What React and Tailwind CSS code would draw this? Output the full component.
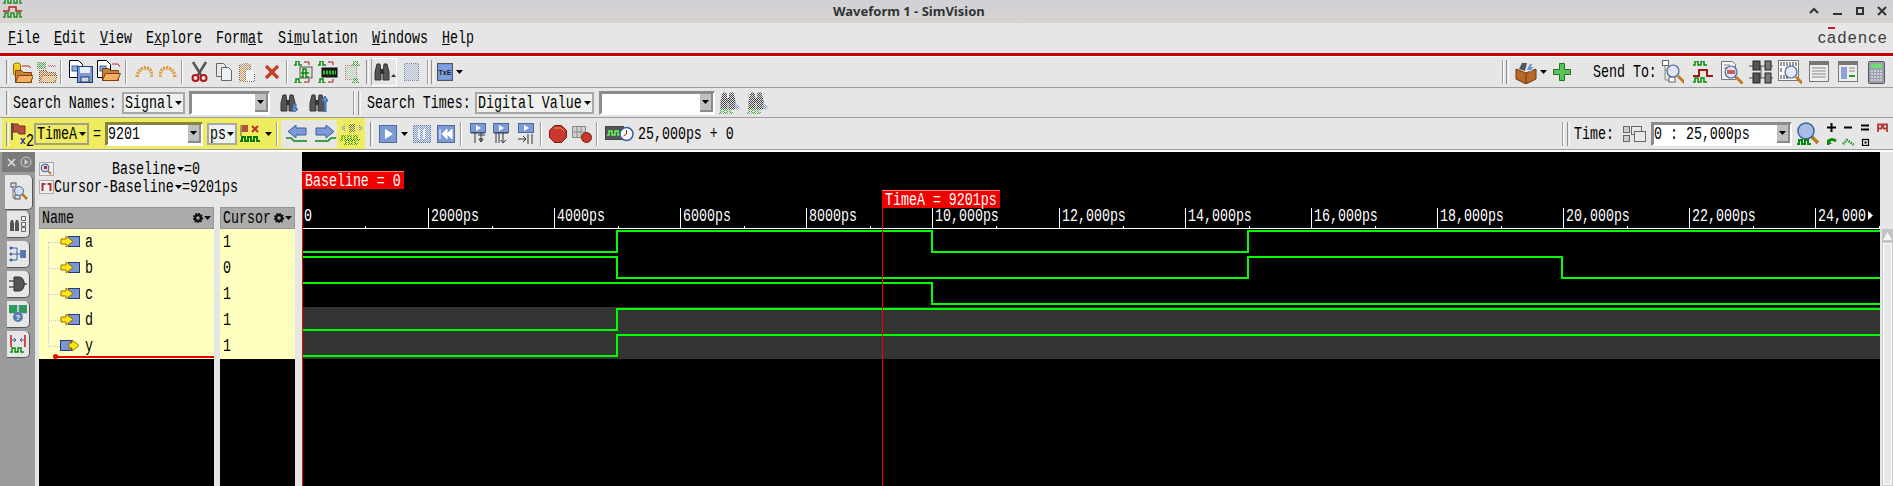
import React from 'react';

// text in the picture is a tall, narrow bitmap font at 8px per char, so squeeze Liberation Mono
const T = ({ children, u = -1, className = '' }) => {
  const text = String(children);
  return (
    <span style={{ width: text.length * 8 }} className={`inline-flex items-center h-[20px] shrink-0 ${className}`}>
      <span className="inline-block origin-left scale-x-[.7] whitespace-pre text-[19px] leading-[20px] font-[family-name:'Liberation_Mono',monospace]">
        {u < 0 ? text : (<>{text.slice(0, u)}<u className="underline-offset-1">{text[u]}</u>{text.slice(u + 1)}</>)}
      </span>
    </span>
  );
};

const S = ({ w, h, c = '', children }) => (
  <svg width={w} height={h} viewBox={`0 0 ${w} ${h}`} className={`shrink-0 ${c}`}>{children}</svg>
);

const Handle = ({ c = '' }) => <div className={`w-[3px] h-[24px] shrink-0 border-l border-r border-l-[#8f8f8f] border-r-[#f8f8f8] bg-[#e6e6e6] ${c}`} />;
const Sep = ({ c = '' }) => <div className={`w-[2px] h-[24px] shrink-0 border-l border-r border-l-[#9a9a9a] border-r-white ${c}`} />;
const Caret = ({ c = '' }) => <S w={7} h={4} c={c}><path d="M0 0h7L3.5 4z" fill="#000" /></S>;

// checker overlay gives the dithered look of disabled icons
const Off = ({ w, h, y }) => <rect width={w} height={h} fill={y ? 'url(#chkY)' : 'url(#chk)'} />;

const Wave = ({ x = 0, y = 0, n = 3, color = '#0a8a0a', sw = 1.5 }) => {
  let d = `M${x} ${y + 4}h2`;
  for (let i = 0; i < n; i++) d += 'v-4h3v4h3';
  return <path d={d} fill="none" stroke={color} strokeWidth={sw} />;
};

const FolderG = ({ x = 0, y = 0 }) => (
  <g transform={`translate(${x} ${y})`}>
    <path d="M.5 2.5h6l2 2h8v10H.5z" fill="#c9803a" stroke="#7a4210" />
    <path d="M.5 14.5l3-7h15l-3 7z" fill="#f4b060" stroke="#7a4210" />
  </g>
);
const PageG = ({ x = 0, y = 0 }) => (
  <g transform={`translate(${x} ${y})`}>
    <path d="M.5.5h9l4 4v13H.5z" fill="#fff" stroke="#000" />
    <rect x="3" y="6" width="6" height="5" fill="#8fb0e0" stroke="#36609a" />
  </g>
);

const OpenDb = () => (
  <S w={20} h={22}>
    <ellipse cx="4" cy="4" rx="3.5" ry="2" fill="#ffe23a" stroke="#8a7000" />
    <path d="M.5 4v9c0 2 7 2 7 0V4" fill="#f2c81c" stroke="#8a7000" />
    <path d="M9 5h7l2 2" fill="none" stroke="#b03020" />
    <FolderG x={2} y={7} />
  </S>
);
const OpenDis = () => (
  <S w={20} h={22}>
    <rect x="0" y="1" width="9" height="7" fill="#5aa05a" />
    <path d="M11 5h8" stroke="#b03020" />
    <FolderG x={2} y={7} />
    <Off w={20} h={22} />
  </S>
);
const SaveIcon = () => (
  <S w={24} h={24}>
    <PageG x={0} y={0} />
    <rect x="8.5" y="6.5" width="15" height="16" fill="#7e9ad0" stroke="#1e3c78" />
    <rect x="11" y="7" width="10" height="6" fill="#e8eefa" />
    <rect x="12" y="17" width="8" height="5" fill="#d4d8e0" stroke="#1e3c78" />
  </S>
);
const OpenPage = () => (
  <S w={24} h={24}>
    <PageG x={0} y={0} />
    <FolderG x={5} y={6} />
    <path d="M15 4h6l2 3" fill="none" stroke="#b03020" />
  </S>
);
const Undo = ({ flip }) => (
  <S w={18} h={14}>
    <g transform={flip ? 'translate(18 0) scale(-1 1)' : ''}>
      <path d="M2 12C3 5 8 2 12 3s5 5 5 9" fill="none" stroke="#dd9a3c" strokeWidth="3.5" strokeDasharray="2 1" />
    </g>
  </S>
);
const Scissors = () => (
  <S w={17} h={22}>
    <path d="M2 1l8 13M15 1L7 14" stroke="#555" strokeWidth="2.5" />
    <circle cx="4.5" cy="17" r="3" fill="none" stroke="#b81414" strokeWidth="2" />
    <circle cx="12.5" cy="17" r="3" fill="none" stroke="#b81414" strokeWidth="2" />
  </S>
);
const Copy = () => (
  <S w={16} h={18}>
    <path d="M.5.5h7l2 2v11H.5z" fill="#e8e8e8" stroke="#666" />
    <path d="M5.5 4.5h7l3 3v10h-10z" fill="#f0f0f0" stroke="#666" />
  </S>
);
const Paste = () => (
  <S w={16} h={20}>
    <rect x=".5" y="3" width="11" height="16" fill="#d89a50" stroke="#8a5a20" />
    <rect x="3" y="1" width="6" height="3" fill="#999" />
    <path d="M6.5 7.5h5l4 4v8h-9z" fill="#fff" stroke="#777" />
    <Off w={16} h={20} />
  </S>
);
const Cross = () => (
  <S w={16} h={16}>
    <path d="M2 2l12 12M14 2L2 14" stroke="#c8402c" strokeWidth="3.5" />
  </S>
);
const Binary = () => (
  <S w={20} h={22}>
    <Wave x={0} y={0} n={1} />
    <Wave x={0} y={18} n={1} />
    <path d="M10 1h5v3M10 21h5v-3" fill="none" stroke="#a01818" />
    <rect x="6" y="6" width="12" height="11" fill="#ddd" stroke="#555" />
    <Wave x={7} y={8} n={1} />
    <Wave x={7} y={12} n={1} />
  </S>
);
const Group2 = () => (
  <S w={20} h={22}>
    <Wave x={0} y={0} n={1} />
    <Wave x={0} y={18} n={1} />
    <path d="M10 1h5v3M10 21h5v-3" fill="none" stroke="#a01818" />
    <rect x="4" y="7" width="15" height="9" fill="#1a1a1a" stroke="#111" />
    <path d="M5 11.5h13" stroke="#22c022" strokeWidth="4" strokeDasharray="2 1" />
  </S>
);
const Group3 = () => (
  <S w={21} h={22}>
    <rect x="3" y="5" width="12" height="13" fill="#b4d4b4" stroke="#a01818" strokeDasharray="1 1" />
    <Wave x={10} y={0} n={1} />
    <Wave x={10} y={18} n={1} />
    <Off w={21} h={22} />
  </S>
);
const Binocs = ({ c = '#555' }) => (
  <g>
    <path d="M1 9l2-8h3l1 8v8H1z" fill={c} stroke="#333" />
    <path d="M9 9l1-8h3l2 8v8H9z" fill={c} stroke="#333" />
    <rect x="6" y="6" width="4" height="5" fill="#333" />
  </g>
);
const FindBox = () => (
  <div className="ml-[2px] w-[26px] h-[28px] shrink-0 border-t border-l border-b border-r border-t-white border-l-[#a0a0a0] border-r-white border-b-white flex items-center pl-[2px]">
    <S w={22} h={18}>
      <Binocs />
      <path d="M17 14h5l-2.5-3z" fill="#333" />
    </S>
  </div>
);
const Dots = () => (
  <S w={15} h={18}>
    <rect x=".5" y=".5" width="14" height="17" fill="#aebcd4" stroke="#6a86b0" />
    <Off w={15} h={18} />
  </S>
);
const TxE = () => (
  <S w={16} h={18}>
    <rect x=".5" y=".5" width="15" height="17" fill="#6f94da" stroke="#555" />
    <rect x="2" y="2" width="12" height="14" fill="#7da0e0" />
    <text x="8" y="12" fontSize="7" fontWeight="700" textAnchor="middle" fontFamily="Liberation Sans" fill="#222">TxE</text>
  </S>
);
const Toolbox = () => (
  <S w={22} h={24}>
    <path d="M1 9l10 4 10-4v10l-10 5-10-5z" fill="#b8682a" stroke="#6a3a10" />
    <path d="M11 13v11" stroke="#6a3a10" />
    <path d="M4 9l3-6h5l-2 8z" fill="#555" />
    <path d="M11 10l4-7 3 1-2 2 3 1-3 4z" fill="#6f94da" stroke="#e8e8e8" />
  </S>
);
const Plus = () => (
  <S w={18} h={18}>
    <path d="M6.5.5h5v6h6v5h-6v6h-5v-6h-6v-5h6z" fill="#5cc05c" stroke="#1a7a1a" />
  </S>
);
const Lens = ({ x = 8, y = 8, r = 6 }) => (
  <g>
    <path d={`M${x + r - 1} ${y + r - 1}l7 7`} stroke="#c07a20" strokeWidth="3" />
    <circle cx={x} cy={y} r={r} fill="#dbe4f5" fillOpacity=".8" stroke="#4a6a9a" strokeWidth="1.2" />
  </g>
);
const Tree1 = () => (
  <S w={22} h={24}>
    <path d="M3 4v16h6M3 10h6" fill="none" stroke="#888" />
    <rect x=".5" y=".5" width="6" height="5" fill="#fff" stroke="#666" />
    <rect x="7" y="17" width="6" height="5" fill="#fff" stroke="#666" />
    <Lens x={11} y={11} r={6} />
  </S>
);
const WaveMix = () => (
  <S w={20} h={22}>
    <Wave x={0} y={0} n={2} />
    <path d="M0 15h6v-6h8v6h6" fill="none" stroke="#a01818" strokeWidth="2" />
    <Wave x={0} y={17} n={2} />
  </S>
);
const DocLens = () => (
  <S w={22} h={24}>
    <path d="M.5 1.5h11l3 3v15H.5z" fill="#f4f4f4" stroke="#777" />
    <path d="M3 5h6M3 8h8" stroke="#888" />
    <Lens x={10} y={12} r={6} />
    <path d="M6 11h8M6 13h8" stroke="#c03030" strokeWidth="1.5" />
  </S>
);
const Blocks = () => (
  <S w={24} h={24}>
    <path d="M0 6h24M0 18h24M12 6v12" stroke="#555" />
    <rect x="4" y="1" width="7" height="9" fill="#555" stroke="#222" />
    <rect x="16" y="1" width="6" height="9" fill="#777" stroke="#222" />
    <rect x="4" y="13" width="7" height="10" fill="#555" stroke="#222" />
    <rect x="16" y="13" width="6" height="10" fill="#777" stroke="#222" />
  </S>
);
const BitsLens = () => (
  <S w={24} h={24}>
    <rect x=".5" y=".5" width="20" height="20" fill="#fff" stroke="#777" />
    <path d="M3 2v4M6 2v4M9 2v4M12 2v4M15 2v4M18 2v4M3 15v4M6 15v4M9 15v4M3 8v4" stroke="#333" />
    <Lens x={13} y={12} r={6} />
  </S>
);
const WinList = () => (
  <S w={20} h={22}>
    <rect x=".5" y=".5" width="19" height="20" fill="#eee" stroke="#777" />
    <rect x="1" y="1" width="18" height="3" fill="#777" />
    <path d="M3 7h14M3 10h14M3 13h14M3 16h14" stroke="#888" />
  </S>
);
const WinDetail = () => (
  <S w={20} h={22}>
    <rect x=".5" y=".5" width="19" height="20" fill="#eee" stroke="#777" />
    <rect x="1" y="1" width="18" height="3" fill="#777" />
    <rect x="3" y="6" width="6" height="12" fill="#8fa2d8" />
    <path d="M11 7h6M11 10h6" stroke="#888" />
    <path d="M11 15h6" stroke="#2aa02a" strokeWidth="2" />
  </S>
);
const Calc = () => (
  <S w={17} h={23}>
    <rect x=".5" y=".5" width="16" height="22" rx="1" fill="#9aa0a8" stroke="#556" />
    <rect x="3" y="3" width="11" height="4" fill="#6fdc6f" />
    <path d="M3 10h11M3 13h11M3 16h11M3 19h11" stroke="#dde" strokeWidth="1.5" strokeDasharray="2 1" />
  </S>
);
const BinoDown = ({ up }) => (
  <S w={19} h={18}>
    <Binocs />
    {up
      ? <path d="M15 18V7h-3l4-5 3 5h-2v11z" fill="#6f94da" stroke="#36609a" />
      : <path d="M13 10h3v5h2l-3.5 3-3.5-3h2z" fill="#6f94da" stroke="#36609a" />}
  </S>
);
const BinoWave = () => (
  <S w={22} h={22}>
    <g transform="translate(1 0)"><Binocs c="#444" /></g>
    <Wave x={0} y={17} n={2} color="#2a9a2a" />
    <path d="M15 15l3-3 3 3-3 3z" fill="#6f94da" />
    <Off w={22} h={22} />
  </S>
);
const FlagX2 = () => (
  <div className="relative w-[22px] h-[24px] ml-[2px] shrink-0">
    <S w={16} h={18}>
      <path d="M1 1v17" stroke="#555" strokeWidth="2" />
      <path d="M2 2h5l1 2h6v8H8l-1-2H2z" fill="#b3523c" stroke="#7a2a20" />
    </S>
    <span className="absolute left-[9px] top-[14px] text-[10px] font-bold leading-none text-[#1a2a90] font-[family-name:'Liberation_Sans',sans-serif]">x</span>
    <span className="absolute left-[15px] top-[6px]"><T>2</T></span>
  </div>
);
const FlagWave = () => (
  <S w={23} h={20}>
    <path d="M1 1v11" stroke="#555" />
    <path d="M2 1h6v7H2z" fill="#b3523c" />
    <path d="M12 2l6 6M18 2l-6 6" stroke="#c03030" strokeWidth="2" />
    <Wave x={0} y={13} n={3} color="#0a7a0a" sw={2} />
  </S>
);
const Arrow = ({ right }) => (
  <S w={21} h={18}>
    {right ? (
      <g>
        <path d="M1 3h10V0l8 6.5-8 6.5v-3H1z" fill="#7d9ad6" stroke="#36609a" />
        <path d="M0 16h13l3-3h5" fill="none" stroke="#0a8a0a" strokeWidth="1.5" />
      </g>
    ) : (
      <g>
        <path d="M20 3H10V0L2 6.5l8 6.5v-3h10z" fill="#7d9ad6" stroke="#36609a" />
        <path d="M21 16H8l-3-3H0" fill="none" stroke="#0a8a0a" strokeWidth="1.5" />
      </g>
    )}
  </S>
);
const Multi = () => (
  <S w={24} h={22}>
    <path d="M1 5l4-4v8zM23 5l-4-4v8z" fill="#6f94da" />
    <path d="M9 1h6v8H9z" fill="#777" />
    <Wave x={0} y={13} n={3} color="#0a8a0a" />
    <Wave x={4} y={17} n={2} color="#0a8a0a" />
    <Off w={24} h={22} y />
  </S>
);
const BlueBtn = ({ children, w = 18, h = 18, off }) => (
  <S w={w} h={h}>
    <rect x=".5" y=".5" width={w - 1} height={h - 1} fill="#7d9ad6" stroke="#4a6a9a" />
    {children}
    {off && <Off w={w} h={h} />}
  </S>
);
const Step = ({ kind }) => (
  <S w={16} h={22}>
    <rect x=".5" y=".5" width="15" height="9" fill="#7d9ad6" stroke="#4a6a9a" />
    <path d="M6 2l5 3-5 3z" fill="#fff" />
    {kind === 1 && <path d="M1 10h14M5 10v10M8 12h7M11 10v9M13 16l-2 3-2-3z" stroke="#334" fill="none" />}
    {kind === 2 && <path d="M1 10h14M3 10v10M6 10v10M10 10v9M8 17l2 3 3-3" stroke="#334" fill="none" />}
    {kind === 3 && <path d="M0 16h7M5 13l3 3-3 3M10 11v10M14 11v10" stroke="#334" fill="none" />}
  </S>
);
const Rec = () => (
  <S w={18} h={18}>
    <path d="M5.5.5h7l5 5v7l-5 5h-7l-5-5v-7z" fill="#c8382c" stroke="#7a1a14" />
    <path d="M5 3h7l3 3" fill="none" stroke="#e88878" />
  </S>
);
const RecSet = () => (
  <S w={20} h={18}>
    <rect x=".5" y="1.5" width="13" height="11" fill="#d0d0d0" stroke="#888" />
    <path d="M5 2v10M9 2v10M1 7h12" stroke="#888" />
    <circle cx="14.5" cy="12.5" r="5" fill="#c8382c" stroke="#7a1a14" />
  </S>
);
const SimClock = () => (
  <S w={29} h={17}>
    <rect x=".5" y="1.5" width="18" height="13" fill="#555" stroke="#444" />
    <Wave x={2} y={6} n={2} color="#5cff5c" />
    <circle cx="21.5" cy="9" r="6.5" fill="#fff" stroke="#36609a" strokeWidth="1.5" />
    <path d="M21.5 5v4l-3 2" fill="none" stroke="#a01818" />
  </S>
);
const TimeIcons = () => (
  <S w={23} h={20}>
    <rect x=".5" y="2.5" width="6" height="6" fill="#ccc" stroke="#666" />
    <rect x=".5" y="11.5" width="6" height="6" fill="#ccc" stroke="#666" />
    <rect x="8.5" y="2.5" width="10" height="8" fill="#e8e8e8" stroke="#666" />
    <rect x="11.5" y="7.5" width="11" height="10" fill="#e8e8e8" stroke="#666" />
  </S>
);
const ZoomWave = () => (
  <S w={23} h={24}>
    <path d="M13 13l8 8" stroke="#b87a20" strokeWidth="3.5" />
    <circle cx="9" cy="9" r="8" fill="#a8bce8" stroke="#36609a" strokeWidth="1.5" />
    <Wave x={0} y={18} n={2} color="#0a8a0a" sw={2} />
  </S>
);
const ZoomCluster = () => (
  <S w={62} h={24} c="ml-[7px]">
    <path d="M0 5.500h9M4.500 1v9M17 5.500h8M34 3.500h8M34 7.500h8" stroke="#000" strokeWidth="2" />
    <path d="M51 10V2.500h4v4M60 10V2.500h-4v4M51 6.500h4M60 6.500h-4" fill="none" stroke="#b03838" strokeWidth="1.800" />
    <path d="M1 23v-3c2-3 5-3 8-1" fill="none" stroke="#0a8a0a" strokeWidth="3" />
    <path d="M0 17v5h5z" fill="#0a8a0a" />
    <path d="M16 22l4-4 7 5" fill="none" stroke="#2a9a2a" strokeWidth="2.500" strokeDasharray="1.500 1" />
    <rect x="35.500" y="17.500" width="6" height="6" fill="none" stroke="#000" strokeWidth="1.200" />
    <rect x="37.500" y="19.500" width="2" height="2" fill="#000" />
  </S>
);

const Combo = ({ w, text, yellow }) => (
  <div className={`${w} h-[22px] shrink-0 flex items-center border-2 pl-[1px] ${yellow ? 'border-[#a0a088] bg-[#efec5f]' : 'border-[#a8a8a8] bg-[#eef1ee]'}`}>
    <T>{text}</T>
    <Caret c="ml-auto mr-[1px]" />
  </div>
);
const Input = ({ w, text, olive }) => (
  <div className={`${w} h-[24px] shrink-0 flex items-center bg-white border-t-[3px] border-l-[3px] ${olive ? 'border-[#84843c]' : 'border-[#8c8c8c]'} border-r-[2px] border-b-[2px] border-r-white border-b-white`}>
    {text && <T>{text}</T>}
    <div className="ml-auto w-[13px] h-[18px] bg-[#c0c0c0] border-r-2 border-b-2 border-[#8a8a8a] flex items-center justify-center"><Caret /></div>
  </div>
);

const menus = [['File', 0], ['Edit', 0], ['View', 0], ['Explore', 1], ['Format', 4], ['Simulation', 2], ['Windows', 0], ['Help', 0]];

const TitleBar = () => (
  <div className="h-[23px] shrink-0 flex items-center relative bg-linear-to-b from-[#d2d0d6] to-[#d7d4cd]">
    <S w={19} h={18} c="ml-[3px] self-start">
      <Wave x={0} y={-1} n={3} color="#1f8f1f" />
      <path d="M0 11h6V7h7v4h6" fill="none" stroke="#c02020" strokeWidth="1.5" />
      <Wave x={0} y={13} n={3} color="#1f8f1f" />
    </S>
    <span className="absolute left-[833px] text-[13px] font-bold text-[#2e3436] font-[family-name:'Noto_Sans',sans-serif]">Waveform 1 - SimVision</span>
    <S w={80} h={14} c="ml-auto mr-[4px]">
      <path d="M1 8l4-4 4 4" fill="none" stroke="#2e3436" strokeWidth="2" />
      <path d="M24 9h9" stroke="#2e3436" strokeWidth="2" />
      <rect x="48" y="3" width="6" height="6" fill="none" stroke="#2e3436" strokeWidth="2" />
      <path d="M69 2l8 8M77 2l-8 8" stroke="#2e3436" strokeWidth="2" />
    </S>
  </div>
);

const MenuBar = () => (
  <div className="h-[30px] shrink-0 flex items-center bg-[#e6e6e6] pl-[8px] gap-[14px]">
    {menus.map(([m, u]) => <T key={m} u={u}>{m}</T>)}
    <span className="ml-auto mr-[5px] relative text-[16px] tracking-[1.4px] text-[#3a3a3a] font-[family-name:'Liberation_Sans',sans-serif]">
      cadence
      <span className="absolute left-[10px] top-[1px] w-[7px] h-[2px] bg-[#c02020]" />
    </span>
  </div>
);

const ToolbarOne = () => (
  <div className="h-[31px] shrink-0 flex items-center bg-[#e6e6e6] pl-[6px] border-b border-[#9c9c9c]">
    <Handle />
    <div className="ml-[4px]"><OpenDb /></div>
    <div className="ml-[4px]"><OpenDis /></div>
    <Sep c="ml-[3px]" />
    <div className="ml-[7px]"><SaveIcon /></div>
    <div className="ml-[4px]"><OpenPage /></div>
    <Sep c="ml-[4px]" />
    <div className="ml-[8px]"><Undo /></div>
    <div className="ml-[6px]"><Undo flip /></div>
    <Sep c="ml-[4px]" />
    <div className="ml-[8px]"><Scissors /></div>
    <div className="ml-[8px]"><Copy /></div>
    <div className="ml-[7px]"><Paste /></div>
    <div className="ml-[9px]"><Cross /></div>
    <Sep c="ml-[6px]" />
    <div className="ml-[6px]"><Binary /></div>
    <div className="ml-[4px]"><Group2 /></div>
    <div className="ml-[4px]"><Group3 /></div>
    <Handle c="ml-[3px]" />
    <FindBox />
    <div className="ml-[7px]"><Dots /></div>
    <Sep c="ml-[8px]" />
    <Handle c="ml-[2px]" />
    <div className="ml-[3px]"><TxE /></div>
    <Caret c="ml-[3px]" />
    <div className="flex-1" />
    <Sep />
    <Handle c="ml-[2px]" />
    <div className="ml-[6px]"><Toolbox /></div>
    <Caret c="ml-[3px]" />
    <div className="ml-[6px]"><Plus /></div>
    <T className="ml-[22px]">Send To:</T>
    <div className="ml-[5px]"><Tree1 /></div>
    <div className="ml-[9px]"><WaveMix /></div>
    <div className="ml-[8px]"><DocLens /></div>
    <div className="ml-[6px]"><Blocks /></div>
    <div className="ml-[5px]"><BitsLens /></div>
    <div className="ml-[7px]"><WinList /></div>
    <div className="ml-[9px]"><WinDetail /></div>
    <div className="ml-[10px] mr-[8px]"><Calc /></div>
  </div>
);

const ToolbarTwo = () => (
  <div className="h-[30px] shrink-0 flex items-center bg-[#e6e6e6] pl-[6px] border-b border-[#9c9c9c]">
    <Handle />
    <T className="ml-[4px]">Search Names:</T>
    <div className="ml-[5px]"><Combo w="w-[63px]" text="Signal" /></div>
    <div className="ml-[4px]"><Input w="w-[81px]" /></div>
    <div className="ml-[10px]"><BinoDown /></div>
    <div className="ml-[10px]"><BinoDown up /></div>
    <Sep c="ml-[25px]" />
    <Handle c="ml-[3px]" />
    <T className="ml-[6px]">Search Times:</T>
    <div className="ml-[4px]"><Combo w="w-[119px]" text="Digital Value" /></div>
    <div className="ml-[5px]"><Input w="w-[116px]" /></div>
    <div className="ml-[4px]"><BinoWave /></div>
    <div className="ml-[6px]"><BinoWave /></div>
  </div>
);

const ToolbarThree = () => (
  <div className="h-[32px] shrink-0 flex items-center bg-[#e6e6e6] border-b border-[#9c9c9c]">
    <div className="ml-[2px] w-[363px] h-full shrink-0 flex items-center bg-[#efec5f] pl-[4px]">
      <Handle />
      <FlagX2 />
      <div className="ml-[1px]"><Combo w="w-[55px]" text="TimeA" yellow /></div>
      <T className="ml-[4px]">=</T>
      <div className="ml-[4px]"><Input w="w-[98px]" text="9201" olive /></div>
      <div className="ml-[4px]"><Combo w="w-[30px]" text="ps" /></div>
      <div className="ml-[3px]"><FlagWave /></div>
      <Caret c="ml-[2px]" />
      <Sep c="ml-[4px]" />
      <div className="ml-[3px] w-[56px] h-[28px] shrink-0 bg-[#e6e6e6] flex items-center pl-[5px] gap-[8px]">
        <Arrow /><Arrow right />
      </div>
      <div className="ml-[3px]"><Multi /></div>
    </div>
    <Handle c="ml-[5px]" />
    <div className="ml-[6px]">
      <BlueBtn><path d="M6 4l8 5-8 5z" fill="#fff" /></BlueBtn>
    </div>
    <Caret c="ml-[4px]" />
    <div className="ml-[5px]">
      <BlueBtn off><path d="M6 4v10M11 4v10" stroke="#fff" strokeWidth="2" /></BlueBtn>
    </div>
    <div className="ml-[6px]">
      <BlueBtn><path d="M3 4v10M10 4l-5 5 5 5zM15 4l-5 5 5 5z" fill="#fff" stroke="#fff" /></BlueBtn>
    </div>
    <Sep c="ml-[5px]" />
    <div className="ml-[8px]"><Step kind={1} /></div>
    <div className="ml-[7px]"><Step kind={2} /></div>
    <div className="ml-[9px]"><Step kind={3} /></div>
    <Sep c="ml-[6px]" />
    <div className="ml-[7px]"><Rec /></div>
    <div className="ml-[5px]"><RecSet /></div>
    <Sep c="ml-[4px]" />
    <div className="ml-[7px]"><SimClock /></div>
    <T className="ml-[4px]">25,000ps + 0</T>
    <div className="flex-1" />
    <Sep />
    <Handle c="ml-[3px]" />
    <T className="ml-[4px]">Time:</T>
    <div className="ml-[9px]"><TimeIcons /></div>
    <div className="ml-[5px]"><Input w="w-[141px]" text="0 : 25,000ps" /></div>
    <div className="ml-[5px]"><ZoomWave /></div>
    <ZoomCluster />
    <div className="w-[4px]" />
  </div>
);

const TabIcon = ({ i }) => {
  if (i === 0) return (
    <S w={18} h={20}>
      <path d="M3 2v14h4M3 8h4" fill="none" stroke="#777" />
      <rect x="1" y="1" width="5" height="4" fill="#ddd" stroke="#555" />
      <rect x="5" y="13" width="5" height="4" fill="#ddd" stroke="#555" />
      <path d="M12 12l5 5" stroke="#b87a20" strokeWidth="2.5" />
      <circle cx="9" cy="9" r="4.5" fill="#cfdcf5" stroke="#4a6a9a" />
    </S>
  );
  if (i === 1) return (
    <S w={18} h={18}>
      <path d="M1 8l1-3h2l1 3v8H1zM6 8l1-3h2l1 3v8H6z" fill="#555" />
      <path d="M12.5 1.500h4v4h-4zM12.5 7.500h4v4h-4zM12.5 12.500h4v4h-4z" fill="#eee" stroke="#666" />
    </S>
  );
  if (i === 2) return (
    <S w={18} h={16}>
      <path d="M1 2h7v12H1M4 8h8" fill="none" stroke="#36609a" />
      <circle cx="2" cy="2" r="1.5" fill="#36609a" /><circle cx="2" cy="8" r="1.5" fill="#36609a" /><circle cx="2" cy="14" r="1.5" fill="#36609a" />
      <rect x="11" y="4" width="6" height="8" fill="#5a78b0" />
    </S>
  );
  if (i === 3) return (
    <S w={18} h={16}>
      <path d="M0 5h5M0 11h5M15 8h3" stroke="#555" strokeWidth="1.5" />
      <path d="M5 1h5c7 0 7 14 0 14H5z" fill="#555" stroke="#333" />
    </S>
  );
  if (i === 4) return (
    <S w={18} h={18}>
      <rect x="0" y="0" width="8" height="8" fill="#2a9a5a" stroke="#5a8a9a" strokeDasharray="2 1" />
      <rect x="10" y="0" width="8" height="8" fill="#2a9a5a" stroke="#5a8a9a" strokeDasharray="2 1" />
      <circle cx="9" cy="12" r="5" fill="#5a78b0" />
      <text x="9" y="15" fontSize="8" fontWeight="700" textAnchor="middle" fontFamily="Liberation Sans" fill="#fff">?</text>
    </S>
  );
  return (
    <S w={16} h={18}>
      <path d="M1 0v12M15 0v12" stroke="#d01818" strokeWidth="1.5" />
      <path d="M2 5h4l-2-2M6 5l-2 2M14 5h-4l2-2M10 5l2 2" fill="none" stroke="#36609a" />
      <Wave x={0} y={13} n={2} color="#0a8a0a" />
    </S>
  );
};

const Rail = () => (
  <div className="w-[35px] shrink-0 bg-[#9b9b9b] flex flex-col">
    <div className="h-[20px] shrink-0 ml-[2px] bg-[#7b7b7b] flex items-center pl-[5px] gap-[4px]">
      <S w={9} h={9}><path d="M1 1l7 7M8 1L1 8" stroke="#e0e0e0" strokeWidth="1.5" /></S>
      <S w={12} h={12}><circle cx="6" cy="6" r="5" fill="none" stroke="#d0d0d0" /><path d="M4.5 3l4 3-4 3z" fill="#d0d0d0" /></S>
    </div>
    <div className="mt-[3px] ml-[5px] w-[28px] h-[35px] bg-[#e6e6e6] rounded-tr-[5px] rounded-br-[5px] border-r border-b border-[#555] flex items-center justify-center">
      <TabIcon i={0} />
    </div>
    <div className="flex flex-col gap-[3px] pt-[1px] ml-[7px]">
      {[1, 2, 3, 4, 5].map((i) => (
        <div key={i} className="w-[23px] h-[27px] bg-[#e6e6e6] rounded-tr-[5px] rounded-br-[5px] border-r border-b border-[#555] flex items-center justify-center">
          <TabIcon i={i} />
        </div>
      ))}
    </div>
  </div>
);

const Gear = () => (
  <S w={18} h={10} c="ml-auto mr-[2px]">
    <circle cx="5" cy="5" r="3" fill="none" stroke="#111" strokeWidth="2.5" />
    <circle cx="5" cy="5" r="4.500" fill="none" stroke="#111" strokeWidth="1.5" strokeDasharray="1.5 1.5" />
    <path d="M11 3h7l-3.5 4z" fill="#111" />
  </S>
);

const SigIcon = ({ out }) => (
  <S w={20} h={12}>
    {out ? (
      <g>
        <rect x=".5" y=".5" width="11" height="10" fill="#7d96d0" stroke="#1e3c78" />
        <path d="M9 3h3V0l7 5.5-7 5.5V8H9z" fill="#ffe81a" stroke="#a06a00" />
      </g>
    ) : (
      <g>
        <rect x="8.5" y=".5" width="11" height="10" fill="#7d96d0" stroke="#1e3c78" />
        <path d="M1 3h5V0l7 5.5L6 11V8H1z" fill="#ffe81a" stroke="#a06a00" />
      </g>
    )}
  </S>
);

const signals = [
  { name: 'a', value: '1' },
  { name: 'b', value: '0' },
  { name: 'c', value: '1' },
  { name: 'd', value: '1' },
  { name: 'y', value: '1', out: true },
];

const NamesPanel = () => (
  <div className="w-[267px] shrink-0 bg-[#e6e6e6] pl-[4px] flex flex-col">
    <div className="h-[55px] shrink-0 pt-[8px] flex flex-col">
      <div className="h-[18px] flex items-center">
        <S w={15} h={14}><rect x=".5" y=".5" width="14" height="13" fill="#eee" stroke="#aaa" /><circle cx="6" cy="6" r="4" fill="#c8d4ee" stroke="#36609a" /><path d="M5 4h3v3H5z" fill="#b03030" /><path d="M9 9l3 3" stroke="#b87a20" strokeWidth="2" /></S>
        <T className="ml-[58px]">Baseline</T>
        <Caret c="ml-[1px]" />
        <T>=0</T>
      </div>
      <div className="h-[18px] flex items-center">
        <S w={15} h={14}><rect x=".5" y=".5" width="14" height="13" fill="#eee" stroke="#aaa" /><path d="M3.5 11V4h3M11.5 11V4h-3" fill="none" stroke="#b03030" strokeWidth="2" /></S>
        <T>Cursor-Baseline</T>
        <Caret c="ml-[1px]" />
        <T>=9201ps</T>
      </div>
    </div>
    <div className="flex-1 flex gap-[6px]">
      <div className="w-[175px] flex flex-col">
        <div className="h-[22px] shrink-0 bg-[#ababab] border border-[#959595] flex items-center pl-[2px]"><T>Name</T><Gear /></div>
        <div className="h-[130px] shrink-0 bg-[#ffffc0] relative">
          <div className="absolute left-[9px] top-[13px] h-[104px] w-[15px] border-l border-dotted border-[#c4c4e4]" />
          {signals.map((s) => (
            <div key={s.name} className="h-[26px] flex items-center pl-[21px] relative">
              <div className="absolute left-[10px] w-[11px] border-t border-dotted border-[#c4c4e4]" />
              <SigIcon out={s.out} />
              <T className="ml-[5px]">{s.name}</T>
            </div>
          ))}
          <div className="absolute left-[17px] right-0 bottom-[1px] h-[2px] bg-[#f00000]" />
          <div className="absolute left-[14px] bottom-0 w-[5px] h-[5px] rounded-full bg-[#f00000]" />
        </div>
        <div className="flex-1 bg-black" />
      </div>
      <div className="w-[75px] flex flex-col">
        <div className="h-[22px] shrink-0 bg-[#ababab] border border-[#959595] flex items-center pl-[2px]"><T>Cursor</T><Gear /></div>
        <div className="h-[130px] shrink-0 bg-[#ffffc0]">
          {signals.map((s) => (
            <div key={s.name} className="h-[26px] flex items-center pl-[3px]"><T>{s.value}</T></div>
          ))}
        </div>
        <div className="flex-1 bg-black" />
      </div>
    </div>
  </div>
);

const ticks = ['0', '2000ps', '4000ps', '6000ps', '8000ps', '10,000ps', '12,000ps', '14,000ps', '16,000ps', '18,000ps', '20,000ps', '22,000ps', '24,000'];

// level changes of each trace, in px from the left of the wave panel
const traces = [
  'M0 23H315V2H630V23H946V2H1578',
  'M0 2H315V23H946V2H1260V23H1578',
  'M0 2H630V23H1578',
  'M0 23H315V2H1578',
  'M0 23H315V2H1578',
];

const WavePanel = () => (
  <div className="w-[1578px] shrink-0 bg-black relative overflow-hidden">
    <div className="h-[77px] flex flex-col justify-end">
      <div className="flex h-[20px] border-b border-white box-content">
        {ticks.map((t, i) => (
          <div key={t} className={`flex w-[126.1px] shrink-0 relative pl-[2px] text-white ${i ? 'border-l border-white' : ''}`}>
            <T className="-mt-[2px]">{t}</T>
            {i === 12 && <S w={5} h={9} c="absolute left-[52px] top-[3px]"><path d="M0 0l5 4.5-5 4.5z" fill="#fff" /></S>}
            <div className="absolute left-[63px] bottom-0 w-px h-[2px] bg-white" />
          </div>
        ))}
      </div>
    </div>
    {traces.map((d, i) => (
      <div key={i} className={`h-[26px] ${i > 2 ? 'bg-[#333533]' : ''}`}>
        <svg width="1578" height="26" className="block"><path d={d} fill="none" stroke="#00ff00" strokeWidth="2" /></svg>
      </div>
    ))}
    <div className="absolute left-0 top-[19px] bottom-0 w-px bg-[#f00000]" />
    <div className="absolute left-0 top-[19px] w-[102px] h-[18px] bg-[#f00000] border-t border-[#ff8080] flex items-center pl-[3px] text-white"><T>Baseline = 0</T></div>
    <div className="absolute left-[580px] top-[38px] bottom-0 w-px bg-[#f00000]" />
    <div className="absolute left-[580px] top-[38px] w-[118px] h-[18px] bg-[#f00000] border-t border-[#ff8080] flex items-center pl-[3px] text-white"><T>TimeA = 9201ps</T></div>
  </div>
);

const ScrollBar = () => (
  <div className="w-[13px] shrink-0 bg-[#e6e6e6] flex flex-col">
    <div className="h-[77px] shrink-0" />
    <div className="ml-[2px] h-[13px] shrink-0 bg-[#c4c4c4] flex items-center justify-center">
      <S w={9} h={8}><path d="M4.5 0L9 8H0z" fill="#f4f4f4" /></S>
    </div>
    <div className="ml-[2px] flex-1 bg-[#c8c8c8] p-[1px]"><div className="h-full bg-[#e8e8e8] border border-white" /></div>
  </div>
);

export default function App() {
  return (
    <div className="w-[1893px] h-[486px] overflow-hidden flex flex-col bg-[#e6e6e6] text-black">
      <svg width="0" height="0" className="absolute">
        <defs>
          <pattern id="chk" width="2" height="2" patternUnits="userSpaceOnUse">
            <rect width="1" height="1" fill="#e6e6e6" /><rect x="1" y="1" width="1" height="1" fill="#e6e6e6" />
          </pattern>
          <pattern id="chkY" width="2" height="2" patternUnits="userSpaceOnUse">
            <rect width="1" height="1" fill="#efec5f" /><rect x="1" y="1" width="1" height="1" fill="#efec5f" />
          </pattern>
        </defs>
      </svg>
      <TitleBar />
      <MenuBar />
      <div className="h-[3px] shrink-0 bg-[#c80000]" />
      <div className="h-px shrink-0 bg-white" />
      <ToolbarOne />
      <ToolbarTwo />
      <ToolbarThree />
      <div className="h-[2px] shrink-0 bg-white" />
      <div className="flex-1 min-h-0 flex">
        <Rail />
        <NamesPanel />
        <WavePanel />
        <ScrollBar />
      </div>
    </div>
  );
}
